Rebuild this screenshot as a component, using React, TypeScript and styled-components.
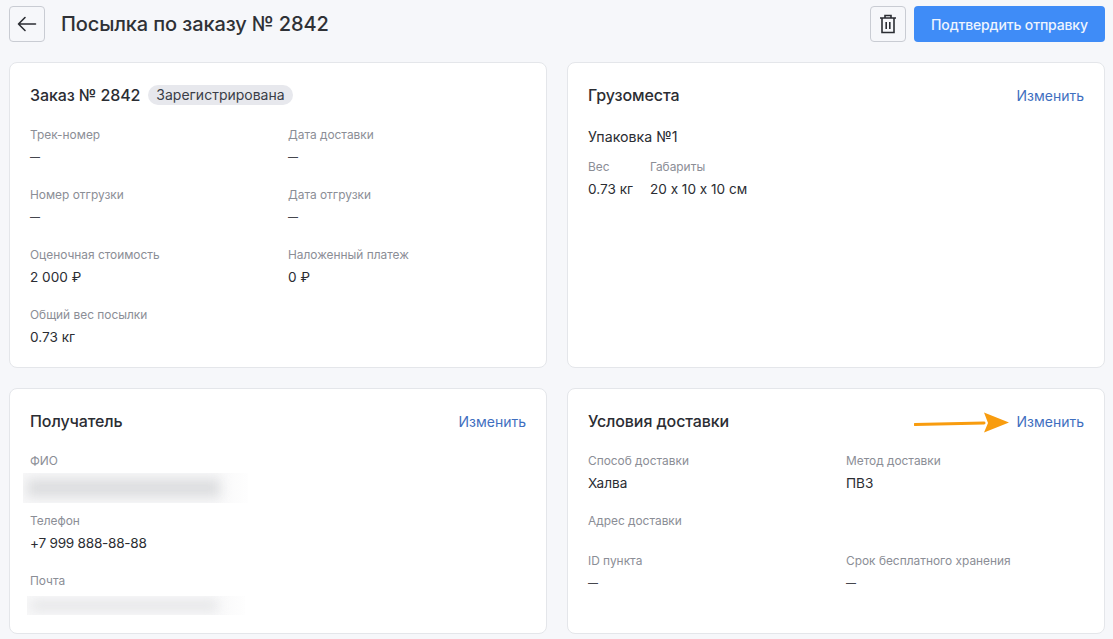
import styled, { createGlobalStyle } from 'styled-components'

const GlobalStyle = createGlobalStyle`
  html, body {
    margin: 0;
    height: 100%;
    background: #f6f7fa;
    font-family: Inter, "Noto Sans", sans-serif;
    color: #2b2d33;
  }
  * { box-sizing: border-box; }
`

const Page = styled.div`
  width: 1113px;
  height: 639px;
  overflow: hidden;
  padding: 6px 8px 0 9px;
`

const Header = styled.header`
  display: flex;
  align-items: center;
  height: 36px;
  margin-bottom: 20px;
`

const IconButton = styled.button`
  width: 36px;
  height: 36px;
  padding: 0;
  display: flex;
  align-items: center;
  justify-content: center;
  background: #f6f7fa;
  border: 1px solid #c9ccd3;
  border-radius: 4px;
  color: #2b2d33;
`

const Title = styled.h1`
  flex: 1;
  margin: 0 0 0 16px;
  font-size: 20px;
  line-height: 26px;
  font-weight: 500;
  letter-spacing: -0.12px;
  color: #2f3136;
`

const PrimaryButton = styled.button`
  width: 191px;
  height: 36px;
  margin-left: 8px;
  border: 0;
  border-radius: 4px;
  background: #3f8cf7;
  color: #eef4fe;
  font-family: inherit;
  font-size: 14px;
  font-weight: 500;
  letter-spacing: -0.15px;
`

const Grid = styled.main`
  display: grid;
  grid-template-columns: 538px 538px;
  grid-template-rows: 306px 246px;
  gap: 20px;
`

const Card = styled.section`
  background: #fff;
  border: 1px solid #e4e6ea;
  border-radius: 8px;
  padding: 20px;
  min-width: 0;
`

const CardHead = styled.div`
  display: flex;
  align-items: center;
  height: 26px;
  margin-bottom: 16px;
`

const CardTitle = styled.h2`
  margin: 0 0 2px;
  font-size: 16px;
  line-height: 24px;
  font-weight: 500;
  letter-spacing: -0.1px;
  color: #2b2d33;
`

const Badge = styled.span`
  margin: 0 0 2px 8px;
  height: 20px;
  padding: 0 8px;
  border-radius: 10px;
  background: #e7e8ed;
  font-size: 14px;
  line-height: 20px;
  color: #3a3d47;
`

const EditLink = styled.a`
  margin-left: auto;
  font-size: 14px;
  line-height: 24px;
  color: #3f6fc0;
`

const Fields = styled.div`
  display: grid;
  grid-template-columns: 258px 1fr;
  row-gap: 16px;
`

const Field = styled.div<{ $gap?: number }>`
  display: flex;
  flex-direction: column;
  min-height: 24px;
  margin-top: ${p => p.$gap ?? 0}px;
`

const Label = styled.span`
  font-size: 11.9px;
  line-height: 20px;
  color: #8b8e96;
`

const Value = styled.span<{ $tight?: boolean }>`
  font-size: 13.6px;
  line-height: 24px;
  letter-spacing: ${p => (p.$tight ? '-0.25px' : '0')};
  color: #2b2d33;
`

const Dash = styled(Value)`
  font-size: 10px;
  font-weight: 600;
  color: #45474d;
`

const Blurred = styled.div<{ $left: number; $w: number; $h: number; $top: number }>`
  position: relative;
  overflow: hidden;
  width: ${p => p.$w}px;
  height: ${p => p.$h}px;
  margin: ${p => p.$top}px 0 0 ${p => p.$left}px;
  background: linear-gradient(90deg, #f8f8f9 0%, #f8f8f9 85%, #fefefe 100%);

  &::before {
    content: '';
    position: absolute;
    inset: 6px 28px 6px 4px;
    background: #dcdddf;
    filter: blur(6px);
  }
`

const PackName = styled.div`
  padding-top: 2px;
  margin-bottom: 10px;
  font-size: 14.2px;
  line-height: 20px;
  color: #2b2d33;
`

const PackRow = styled.div`
  display: flex;
  gap: 17px;
`

const ArrowMark = styled.svg`
  margin-left: auto;
  margin-right: 6px;
  flex: none;
`

const ArrowEdit = styled(EditLink)`
  margin-left: 0;
`

export default function App() {
  return (
    <Page>
      <GlobalStyle />
      <Header>
        <IconButton aria-label="Назад">
          <svg width="20" height="16" viewBox="0 0 20 16" fill="none" stroke="#2b2d33" strokeWidth="1.6" strokeLinecap="round" strokeLinejoin="round">
            <path d="M1.5 8H18.5M8 1.5L1.5 8L8 14.5" />
          </svg>
        </IconButton>
        <Title>Посылка по заказу № 2842</Title>
        <IconButton aria-label="Удалить">
          <svg width="18" height="20" viewBox="0 0 18 20" fill="none" stroke="#2b2d33" strokeWidth="1.6">
            <path d="M1 4H17M6 4V1.5H12V4M3 4V18.5H15V4" />
            <path d="M7.2 8V15M10.8 8V15" />
          </svg>
        </IconButton>
        <PrimaryButton>Подтвердить отправку</PrimaryButton>
      </Header>

      <Grid>
        <Card>
          <CardHead>
            <CardTitle>Заказ № 2842</CardTitle>
            <Badge>Зарегистрирована</Badge>
          </CardHead>
          <Fields>
            <Field><Label>Трек-номер</Label><Dash>—</Dash></Field>
            <Field><Label>Дата доставки</Label><Dash>—</Dash></Field>
            <Field><Label>Номер отгрузки</Label><Dash>—</Dash></Field>
            <Field><Label>Дата отгрузки</Label><Dash>—</Dash></Field>
            <Field><Label>Оценочная стоимость</Label><Value>2 000 ₽</Value></Field>
            <Field><Label>Наложенный платеж</Label><Value>0 ₽</Value></Field>
            <Field><Label>Общий вес посылки</Label><Value>0.73 кг</Value></Field>
          </Fields>
        </Card>

        <Card>
          <CardHead>
            <CardTitle>Грузоместа</CardTitle>
            <EditLink>Изменить</EditLink>
          </CardHead>
          <PackName>Упаковка №1</PackName>
          <PackRow>
            <Field><Label>Вес</Label><Value>0.73 кг</Value></Field>
            <Field><Label>Габариты</Label><Value>20 х 10 х 10 см</Value></Field>
          </PackRow>
        </Card>

        <Card>
          <CardHead>
            <CardTitle>Получатель</CardTitle>
            <EditLink>Изменить</EditLink>
          </CardHead>
          <Field>
            <Label>ФИО</Label>
            <Blurred $left={-7} $w={225} $h={30} $top={2} />
          </Field>
          <Field $gap={8}>
            <Label>Телефон</Label>
            <Value $tight>+7 999 888-88-88</Value>
          </Field>
          <Field $gap={16}>
            <Label>Почта</Label>
            <Blurred $left={-3} $w={218} $h={19} $top={5} />
          </Field>
        </Card>

        <Card>
          <CardHead>
            <CardTitle>Условия доставки</CardTitle>
            <ArrowMark width="96" height="22" viewBox="0 0 96 22">
              <path d="M1 13.5L70 12" stroke="#f89c0e" strokeWidth="3" strokeLinecap="round" fill="none" />
              <path d="M70 1.5L95 11.5L70 21.5L74 12Z" fill="#f89c0e" />
            </ArrowMark>
            <ArrowEdit>Изменить</ArrowEdit>
          </CardHead>
          <Fields>
            <Field><Label>Способ доставки</Label><Value>Халва</Value></Field>
            <Field><Label>Метод доставки</Label><Value>ПВЗ</Value></Field>
            <Field><Label>Адрес доставки</Label></Field>
            <span />
            <Field><Label>ID пункта</Label><Dash>—</Dash></Field>
            <Field><Label>Срок бесплатного хранения</Label><Dash>—</Dash></Field>
          </Fields>
        </Card>
      </Grid>
    </Page>
  )
}
